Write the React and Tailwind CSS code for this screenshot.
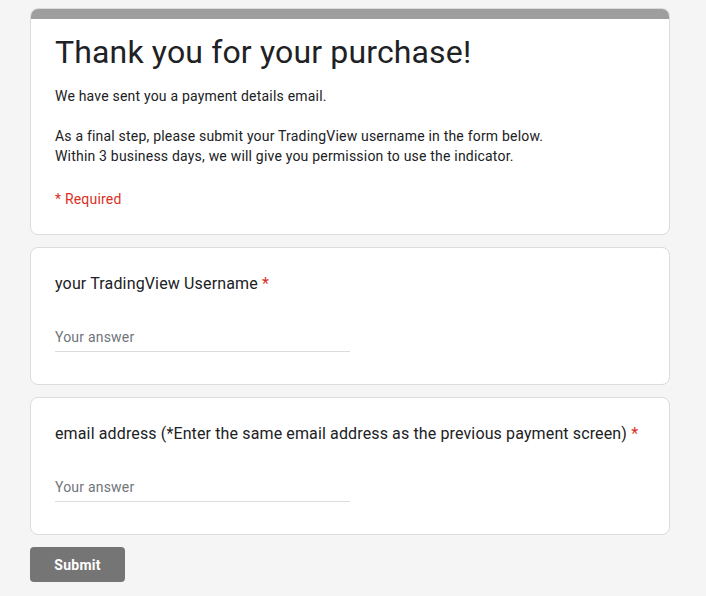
export default function App() {
  const body = { fontFamily: 'Roboto, "Liberation Sans", sans-serif' };
  const fields = [
    { label: 'your TradingView Username', track: 'tracking-[0.15px]' },
    { label: 'email address (*Enter the same email address as the previous payment screen)', track: 'tracking-[0.13px]' },
  ];
  return (
    <div className="min-h-[596px] bg-[#f5f5f5] px-[30px] pt-2 pb-4" style={body}>
      <div className="flex w-[640px] flex-col gap-3">
        <div className="overflow-hidden rounded-lg border border-[#dadce0] bg-white">
          <div className="h-[10px] bg-[#9e9e9e]" />
          <div className="px-6 pt-[11px] pb-[25px]">
            <h1 className="text-[32px] leading-[44px] tracking-[0.15px] text-[#202124]">Thank you for your purchase!</h1>
            <p className="mt-[12px] whitespace-pre-wrap text-sm leading-5 tracking-[0.2px] text-[#202124]">
              {'We have sent you a payment details email.\n\nAs a final step, please submit your TradingView username in the form below.\nWithin 3 business days, we will give you permission to use the indicator.'}
            </p>
            <p className="mt-[23px] text-sm leading-5 tracking-[0.2px] text-[#d93025]">* Required</p>
          </div>
        </div>

        {fields.map(({ label, track }) => (
          <div key={label} className="rounded-lg border border-[#dadce0] bg-white px-6 pt-[24px] pb-[32px]">
            <div className={`whitespace-nowrap text-base leading-6 text-[#202124] ${track}`}>
              {label} <span className="text-[#d93025]">*</span>
            </div>
            <div className="mt-[31px] w-[295px] border-b border-[#dadce0] pb-[4px] text-sm leading-5 tracking-[0.2px] text-[#70757a]">
              Your answer
            </div>
          </div>
        ))}

        <div>
          <button type="button" className="h-[35px] w-[95px] rounded bg-[#757575] text-sm font-bold tracking-[0.25px] text-white">
            Submit
          </button>
        </div>
      </div>
    </div>
  );
}
